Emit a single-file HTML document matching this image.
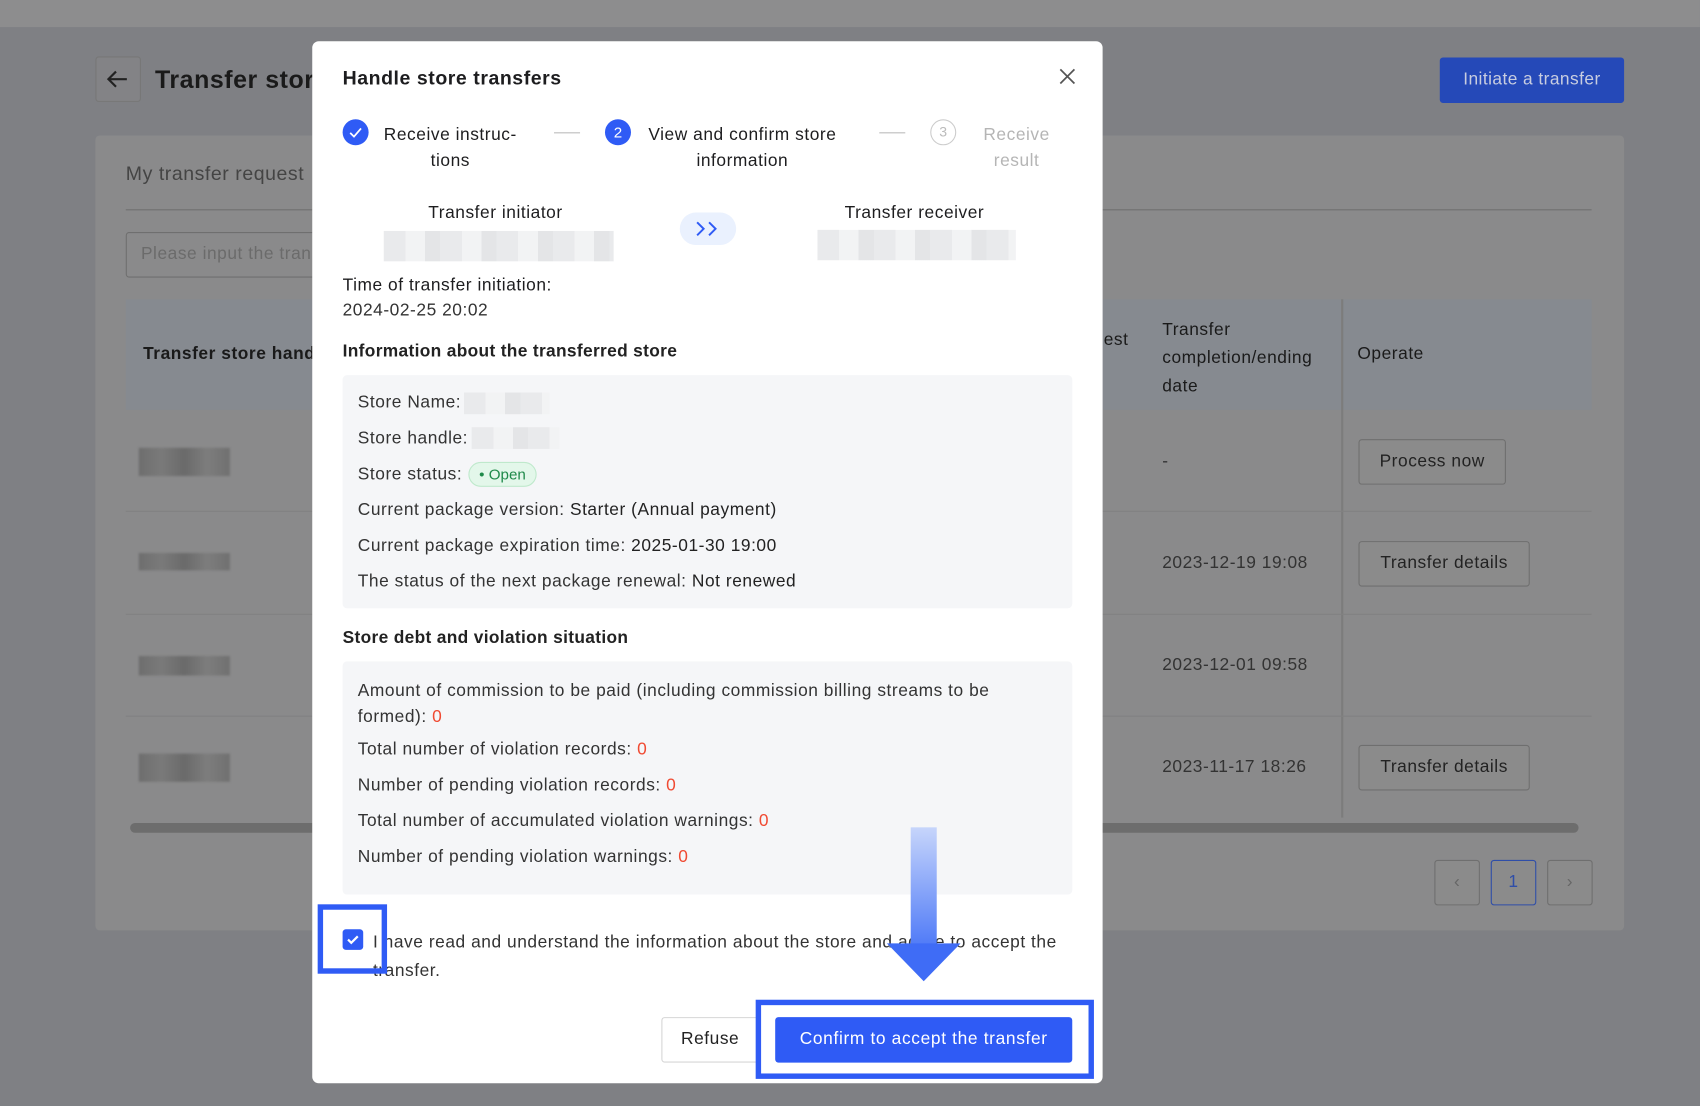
<!DOCTYPE html>
<html><head><meta charset="utf-8"><style>
*{box-sizing:border-box;margin:0;padding:0}
body{width:1700px;height:1106px;overflow:hidden;background:#7f8084;font-family:"Liberation Sans",sans-serif}
#w{position:absolute;left:0;top:0;width:1568px;height:1020px;transform:scale(1.08418,1.08431);transform-origin:0 0;background:#7f8084}
.a{position:absolute}
.t{color:#1d1d1f;font-size:16px;white-space:nowrap;letter-spacing:0.5px}
.blur{background:repeating-linear-gradient(90deg,#e9eaec 0 20px,#f2f3f4 20px 38px,#e4e5e7 38px 52px)}
.bb{background:linear-gradient(90deg,#6e6e6e,#7a7a7a,#6a6a6a,#7d7d7d,#707070);filter:blur(1px)}
.btn{position:absolute;border:1px solid #6f6f6f;border-radius:3px;color:#222;font-size:16px;text-align:center;background:#8b8b8b;letter-spacing:0.5px}
</style></head><body><div id="w">
<div class="a" style="left:0;top:0;width:1568px;height:25px;background:#8d8d8e"></div>
<div class="a" style="left:88px;top:52px;width:42px;height:42px;border:1px solid #777;border-radius:3px;background:#838386"></div>
<svg class="a" style="left:97px;top:63px" width="22" height="20" viewBox="0 0 22 20"><path d="M20 10H3M10 3L3 10l7 7" fill="none" stroke="#222" stroke-width="2"/></svg>
<div class="a t" style="left:143px;top:60px;font-size:23px;font-weight:bold;color:#1a1a1a">Transfer store</div>
<div class="a" style="left:1328px;top:53px;width:170px;height:42px;background:#2549b8;border-radius:3px;color:#c8cde0;font-size:16px;line-height:42px;text-align:center;letter-spacing:0.4px">Initiate a transfer</div>
<div class="a" style="left:88px;top:125px;width:1410px;height:733px;background:#8a8a8b;border-radius:4px"></div>
<div class="a t" style="left:116px;top:150px;font-size:18px;color:#444">My transfer request</div>
<div class="a" style="left:116px;top:193px;width:1352px;height:1px;background:#6f6f6f"></div>
<div class="a" style="left:116px;top:214px;width:200px;height:42px;border:1px solid #6f6f6f;border-radius:3px"></div>
<div class="a t" style="left:130px;top:226px;color:#6b6b6b">Please input the tran</div>
<div class="a" style="left:116px;top:276px;width:1352px;height:102px;background:#868a90"></div>
<div class="a t" style="left:132px;top:318px;font-weight:bold;color:#1a1a1a">Transfer store handl</div>
<div class="a t" style="left:1018px;top:305px;color:#1a1a1a">est</div>
<div class="a t" style="left:1072px;top:292px;color:#1a1a1a;line-height:26px;white-space:normal">Transfer<br>completion/ending<br>date</div>
<div class="a t" style="left:1252px;top:318px;color:#1a1a1a">Operate</div>
<div class="a" style="left:1237px;top:276px;width:2px;height:478px;background:#7c7c7c"></div>
<div class="a" style="left:116px;top:471px;width:1352px;height:1px;background:#818181"></div>
<div class="a" style="left:116px;top:566px;width:1352px;height:1px;background:#818181"></div>
<div class="a" style="left:116px;top:660px;width:1352px;height:1px;background:#818181"></div>
<div class="a bb" style="left:128px;top:413px;width:84px;height:26px"></div>
<div class="a bb" style="left:128px;top:510px;width:84px;height:16px"></div>
<div class="a bb" style="left:128px;top:605px;width:84px;height:18px"></div>
<div class="a bb" style="left:128px;top:695px;width:84px;height:26px"></div>
<div class="a t" style="left:1072px;top:417px;color:#333">-</div>
<div class="a t" style="left:1072px;top:511px;color:#333">2023-12-19 19:08</div>
<div class="a t" style="left:1072px;top:605px;color:#333">2023-12-01 09:58</div>
<div class="a t" style="left:1072px;top:699px;color:#333">2023-11-17 18:26</div>
<div class="btn" style="left:1253px;top:405px;width:136px;height:42px;line-height:40px">Process now</div>
<div class="btn" style="left:1253px;top:499px;width:158px;height:42px;line-height:40px">Transfer details</div>
<div class="btn" style="left:1253px;top:687px;width:158px;height:42px;line-height:40px">Transfer details</div>
<div class="a" style="left:120px;top:759px;width:1336px;height:9px;background:#6d6d6d;border-radius:5px"></div>
<div class="btn" style="left:1323px;top:793px;width:42px;height:42px;line-height:40px;color:#666">&lsaquo;</div>
<div class="btn" style="left:1375px;top:793px;width:42px;height:42px;line-height:40px;border-color:#2f4ea8;color:#2f4ea8">1</div>
<div class="btn" style="left:1427px;top:793px;width:42px;height:42px;line-height:40px;color:#666">&rsaquo;</div>

<!-- modal -->
<div class="a" style="left:288px;top:38px;width:729px;height:961px;background:#fff;border-radius:6px"></div>
<div class="a t" style="left:316px;top:62px;font-size:18px;font-weight:bold">Handle store transfers</div>
<svg class="a" style="left:977px;top:63px" width="15" height="15" viewBox="0 0 15 15"><path d="M1 1L14 14M14 1L1 14" stroke="#555" stroke-width="1.6"/></svg>
<div class="a" style="left:316px;top:110px;width:24px;height:24px;border-radius:50%;background:#2f5bf5"></div>
<svg class="a" style="left:316px;top:110px" width="24" height="24" viewBox="0 0 24 24"><path d="M7 12.5l3.5 3.5L17 8.5" fill="none" stroke="#fff" stroke-width="1.6"/></svg>
<div class="a t" style="left:354px;top:113px;text-align:center;line-height:24px">Receive instruc-<br>tions</div>
<div class="a" style="left:511px;top:122px;width:24px;height:1px;background:#bbb"></div>
<div class="a" style="left:558px;top:110px;width:24px;height:24px;border-radius:50%;background:#2f5bf5;color:#fff;text-align:center;line-height:24px;font-size:14px">2</div>
<div class="a t" style="left:598px;top:113px;text-align:center;line-height:24px">View and confirm store<br>information</div>
<div class="a" style="left:811px;top:122px;width:24px;height:1px;background:#bbb"></div>
<div class="a" style="left:858px;top:110px;width:24px;height:24px;border-radius:50%;border:1px solid #ccc;color:#bbb;text-align:center;line-height:22px;font-size:13px">3</div>
<div class="a t" style="left:907px;top:113px;text-align:center;line-height:24px;color:#b5b5b5">Receive<br>result</div>
<div class="a t" style="left:395px;top:188px">Transfer initiator</div>
<div class="a blur" style="left:354px;top:213px;width:212px;height:28px"></div>
<div class="a" style="left:627px;top:196px;width:52px;height:30px;border-radius:15px;background:#eaf1fe"></div>
<svg class="a" style="left:640px;top:202px" width="26" height="18" viewBox="0 0 26 18"><path d="M3 3l6 6-6 6M14 3l6 6-6 6" fill="none" stroke="#2f5bf5" stroke-width="1.8"/></svg>
<div class="a t" style="left:779px;top:188px">Transfer receiver</div>
<div class="a blur" style="left:754px;top:212px;width:183px;height:28px"></div>
<div class="a t" style="left:316px;top:255px">Time of transfer initiation:</div>
<div class="a t" style="left:316px;top:278px;color:#333">2024-02-25 20:02</div>
<div class="a t" style="left:316px;top:316px;font-weight:bold;color:#222;letter-spacing:0.3px">Information about the transferred store</div>
<div class="a" style="left:316px;top:346px;width:673px;height:215px;background:#f5f6f8;border-radius:4px"></div>
<div class="a t" style="left:330px;top:363px;color:#333">Store Name:</div>
<div class="a blur" style="left:428px;top:362px;width:79px;height:20px"></div>
<div class="a t" style="left:330px;top:396px;color:#333">Store handle:</div>
<div class="a blur" style="left:435px;top:394px;width:81px;height:20px"></div>
<div class="a t" style="left:330px;top:429px;color:#333">Store status:</div>
<div class="a" style="left:432px;top:426px;width:63px;height:23px;border-radius:12px;background:#e3f7ea;border:1px solid #bfe9cc;color:#1f8a4a;font-size:14px;line-height:21px;text-align:center">&bull; Open</div>
<div class="a t" style="left:330px;top:462px;color:#333">Current package version: <span style="color:#222">Starter (Annual payment)</span></div>
<div class="a t" style="left:330px;top:495px;color:#333">Current package expiration time: <span style="color:#222">2025-01-30 19:00</span></div>
<div class="a t" style="left:330px;top:528px;color:#333">The status of the next package renewal: <span style="color:#222">Not renewed</span></div>
<div class="a t" style="left:316px;top:580px;font-weight:bold;color:#222;letter-spacing:0.3px">Store debt and violation situation</div>
<div class="a" style="left:316px;top:610px;width:673px;height:215px;background:#f5f6f8;border-radius:4px"></div>
<div class="a t" style="left:330px;top:626px;color:#333;line-height:24px">Amount of commission to be paid (including commission billing streams to be<br>formed): <span style="color:#f04a32">0</span></div>
<div class="a t" style="left:330px;top:683px;color:#333">Total number of violation records: <span style="color:#f04a32">0</span></div>
<div class="a t" style="left:330px;top:716px;color:#333">Number of pending violation records: <span style="color:#f04a32">0</span></div>
<div class="a t" style="left:330px;top:749px;color:#333">Total number of accumulated violation warnings: <span style="color:#f04a32">0</span></div>
<div class="a t" style="left:330px;top:782px;color:#333">Number of pending violation warnings: <span style="color:#f04a32">0</span></div>
<div class="a" style="left:316px;top:857px;width:19px;height:19px;border-radius:3px;background:#2f5bf5"></div>
<svg class="a" style="left:316px;top:857px" width="19" height="19" viewBox="0 0 19 19"><path d="M5 9.5l3 3 6-6" fill="none" stroke="#fff" stroke-width="2"/></svg>
<div class="a t" style="left:344px;top:857px;color:#333;line-height:26px">I have read and understand the information about the store and agree to accept the<br>transfer.</div>
<div class="a" style="left:293px;top:834px;width:64px;height:64px;border:5px solid #2f5bf5"></div>
<div class="a" style="left:840px;top:763px;width:24px;height:110px;background:linear-gradient(#c6d5fb,#4f7af7)"></div>
<div class="a" style="left:818px;top:870px;width:0;height:0;border-left:34px solid transparent;border-right:34px solid transparent;border-top:35px solid #3f6cf6"></div>
<div class="a" style="left:610px;top:938px;width:90px;height:42px;border:1px solid #d6d6d6;border-radius:3px;color:#222;font-size:16px;line-height:40px;text-align:center;letter-spacing:0.5px">Refuse</div>
<div class="a" style="left:697px;top:922px;width:312px;height:73px;border:5px solid #2f5bf5"></div>
<div class="a" style="left:715px;top:938px;width:274px;height:42px;background:#2f5bf5;border-radius:3px;color:#fff;font-size:16px;line-height:42px;text-align:center;letter-spacing:0.6px">Confirm to accept the transfer</div>
</div></body></html>
